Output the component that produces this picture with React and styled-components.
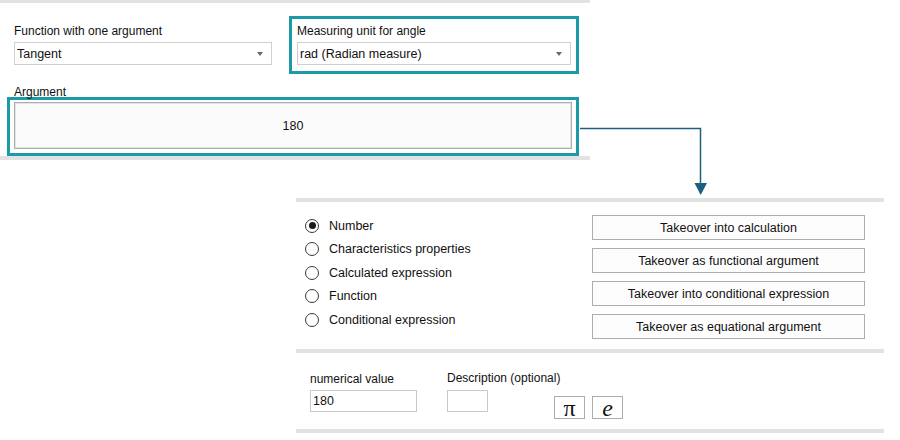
import styled, { createGlobalStyle } from "styled-components";

const GlobalStyle = createGlobalStyle`
  body {
    margin: 0;
    background: #fff;
    font-family: "Liberation Sans", Arial, sans-serif;
    font-size: 12px;
    color: #111;
  }
`;

const Page = styled.div`
  position: relative;
  width: 900px;
  height: 440px;
  overflow: hidden;
  background: #fff;
`;

const Bar = styled.div`
  height: ${(p) => p.$h || 4}px;
  background: #e2e2e2;
  margin-top: ${(p) => p.$mt || 0}px;
`;

const TopPanel = styled.div`
  width: 590px;
  display: flex;
  flex-direction: column;
`;

const FieldRow = styled.div`
  display: flex;
  align-items: flex-start;
  margin-top: 13px;
`;

const FieldGroup = styled.div`
  display: flex;
  flex-direction: column;
  margin-left: 14px;
  padding-top: 6px;
  width: 259px;
`;

const Highlight = styled.div`
  box-sizing: border-box;
  border: 3px solid #1d9aa7;
  display: flex;
  flex-direction: column;
  margin-left: ${(p) => p.$ml}px;
  width: ${(p) => p.$w}px;
  padding: ${(p) => p.$pad};
`;

const Label = styled.div`
  line-height: 15px;
  height: 15px;
  white-space: nowrap;
  padding-top: ${(p) => p.$pt || 0}px;
  margin-bottom: ${(p) => p.$mb || 0}px;
`;

const Combo = styled.div`
  box-sizing: border-box;
  height: 23px;
  width: ${(p) => p.$w}px;
  border: 1px solid #cfcfcf;
  background: #fff;
  display: flex;
  align-items: center;
  justify-content: space-between;
  padding: 0 8px 0 2px;
  font-size: 12.5px;

  &::after {
    content: "";
    border-left: 3.5px solid transparent;
    border-right: 3.5px solid transparent;
    border-top: 4px solid #6a6a6a;
  }
`;

const ArgLabel = styled.div`
  line-height: 15px;
  height: 15px;
  margin: 8px 0 0 14px;
  transform: translateY(3px);
`;

const ArgField = styled.div`
  box-sizing: border-box;
  height: 47px;
  border: 1px solid #adadad;
  box-shadow: inset 0 0 0 1px #e4e4e4;
  background: #fbfbfb;
  display: flex;
  align-items: center;
  justify-content: center;
  font-size: 12.5px;
`;

const BottomPanel = styled.div`
  margin: 38px 0 0 296px;
  width: 588px;
  display: flex;
  flex-direction: column;
`;

const Options = styled.div`
  display: flex;
  justify-content: space-between;
  padding-right: 19px;
`;

const RadioList = styled.div`
  display: flex;
  flex-direction: column;
  margin: 12px 0 0 9px;
`;

const RadioRow = styled.div`
  height: 23.5px;
  display: flex;
  align-items: center;
  gap: 10px;
  font-size: 12.5px;
`;

const RadioCircle = styled.span`
  box-sizing: border-box;
  width: 14px;
  height: 14px;
  border-radius: 50%;
  border: 1px solid #3a3a3a;
  background: #fff;
  display: flex;
  align-items: center;
  justify-content: center;

  &::after {
    content: "";
    width: 7px;
    height: 7px;
    border-radius: 50%;
    background: ${(p) => (p.$on ? "#1a1a1a" : "transparent")};
  }
`;

const ButtonStack = styled.div`
  display: flex;
  flex-direction: column;
  gap: 8px;
  margin-top: 13px;
  width: 273px;
`;

const ActionButton = styled.div`
  box-sizing: border-box;
  height: 25px;
  border: 1px solid #adadad;
  background: #fdfdfd;
  display: flex;
  align-items: center;
  justify-content: center;
  font-size: 12.5px;
`;

const InputRow = styled.div`
  display: flex;
  align-items: flex-start;
  margin-top: 18px;
  padding-left: 14px;
`;

const InputGroup = styled.div`
  display: flex;
  flex-direction: column;
  width: ${(p) => p.$w}px;
  margin-right: ${(p) => p.$mr || 0}px;
`;

const TextBox = styled.div`
  box-sizing: border-box;
  height: 22px;
  border: 1px solid #c9c9c9;
  background: #fff;
  display: flex;
  align-items: center;
  padding-left: 2px;
  font-size: 12.5px;
`;

const SymbolButton = styled.div`
  box-sizing: border-box;
  margin-top: 25px;
  width: ${(p) => p.$w}px;
  height: 23px;
  margin-right: 7px;
  border: 1px solid #adadad;
  background: #fff;
  display: flex;
  align-items: center;
  justify-content: center;
  font-family: "Liberation Serif", "Times New Roman", serif;
  font-size: 24px;
  font-style: ${(p) => (p.$italic ? "italic" : "normal")};
  line-height: 1;
`;

const Connector = styled.svg`
  position: absolute;
  left: 0;
  top: 0;
  pointer-events: none;
`;

const radios = [
  "Number",
  "Characteristics properties",
  "Calculated expression",
  "Function",
  "Conditional expression",
];

const actions = [
  "Takeover into calculation",
  "Takeover as functional argument",
  "Takeover into conditional expression",
  "Takeover as equational argument",
];

export default function App() {
  return (
    <Page>
      <GlobalStyle />
      <TopPanel>
        <Bar $h={3} />
        <FieldRow>
          <FieldGroup>
            <Label $pt={2} $mb={3}>Function with one argument</Label>
            <Combo $w={258}>Tangent</Combo>
          </FieldGroup>
          <Highlight $ml={16} $w={290} $pad="3px 5px 6px 5px">
            <Label $pt={2} $mb={3}>Measuring unit for angle</Label>
            <Combo $w={274}>rad (Radian measure)</Combo>
          </Highlight>
        </FieldRow>
        <ArgLabel>Argument</ArgLabel>
        <Highlight $ml={7} $w={572} $pad="2px 4px 4px 4px">
          <ArgField>180</ArgField>
        </Highlight>
        <Bar $h={4} />
      </TopPanel>

      <BottomPanel>
        <Bar $h={4} />
        <Options>
          <RadioList>
            {radios.map((r, i) => (
              <RadioRow key={r}>
                <RadioCircle $on={i === 0} />
                {r}
              </RadioRow>
            ))}
          </RadioList>
          <ButtonStack>
            {actions.map((a) => (
              <ActionButton key={a}>{a}</ActionButton>
            ))}
          </ButtonStack>
        </Options>
        <Bar $h={4} $mt={10} />
        <InputRow>
          <InputGroup $w={107} $mr={30}>
            <Label $pt={1} $mb={3}>numerical value</Label>
            <TextBox>180</TextBox>
          </InputGroup>
          <InputGroup $w={41} $mr={66}>
            <Label $mb={4}>Description (optional)</Label>
            <TextBox />
          </InputGroup>
          <SymbolButton $w={31}>π</SymbolButton>
          <SymbolButton $w={31} $italic>
            e
          </SymbolButton>
        </InputRow>
        <Bar $h={4} $mt={10} />
      </BottomPanel>

      <Connector width="900" height="440">
        <path d="M580 128.5 H700.5 V185" fill="none" stroke="#1c5f80" strokeWidth="1.5" />
        <polygon points="694.5,183 707,183 700.7,195" fill="#1c5f80" />
      </Connector>
    </Page>
  );
}
